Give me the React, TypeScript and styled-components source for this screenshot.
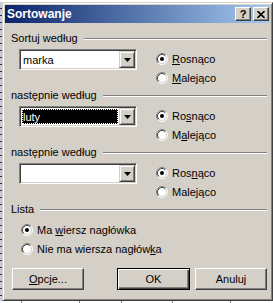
import React from 'react';
import styled, { createGlobalStyle } from 'styled-components';

const GlobalStyle = createGlobalStyle`
  html, body {
    margin: 0;
    padding: 0;
    background: #ffffff;
  }
  body {
    font-family: "Liberation Sans", Arial, sans-serif;
    font-size: 11px;
    color: #000;
  }
`;

const Page = styled.div`
  width: 273px;
  height: 303px;
  display: flex;
  flex-direction: column;
  background: #ffffff;
  overflow: hidden;
`;
const TopStrip = styled.div`
  height: 2px;
  flex-shrink: 0;
`;
const Middle = styled.div`
  display: flex;
`;
const RowHeaders = styled.div`
  width: 2px;
  flex-shrink: 0;
  background: repeating-linear-gradient(to bottom, #c9c7e0 0 6px, #303040 6px 7px);
`;
const SheetRow = styled.div`
  flex: 1;
  display: flex;
`;
const Cell = styled.div<{ $w: number }>`
  width: ${p => p.$w}px;
  flex-shrink: 0;
  border-right: 1px solid #808080;
  box-sizing: border-box;
`;

const Dialog = styled.div`
  width: 271px;
  flex-shrink: 0;
  box-sizing: border-box;
  display: flex;
  flex-direction: column;
  background: #d4d0c8;
  border: 1px solid;
  border-color: #d4d0c8 #404040 #404040 #d4d0c8;
  box-shadow: inset 1px 1px #ffffff, inset -1px -1px #808080;
  padding: 2px;
`;
const TitleBar = styled.div`
  height: 18px;
  display: flex;
  align-items: center;
  gap: 2px;
  padding: 0 1px 0 2px;
  background: linear-gradient(to right, #0a246a, #a6caf0);
`;
const Title = styled.div`
  flex: 1;
  color: #ffffff;
  font-weight: bold;
  font-size: 12px;
`;
const CaptionButton = styled.div`
  width: 16px;
  height: 14px;
  box-sizing: border-box;
  display: flex;
  align-items: center;
  justify-content: center;
  background: #d4d0c8;
  border: 1px solid;
  border-color: #ffffff #404040 #404040 #ffffff;
  box-shadow: inset -1px -1px #808080;
  font-weight: bold;
  font-size: 11px;
  line-height: 1;
`;

const Content = styled.div`
  display: flex;
  flex-direction: column;
  padding: 9px 3px 8px 6px;
`;
const Section = styled.div`
  height: 57px;
  display: flex;
  flex-direction: column;
`;
const GroupHeader = styled.div`
  height: 13px;
  line-height: 13px;
  display: flex;
  align-items: center;
`;
const GroupLine = styled.div`
  flex: 1;
  margin-left: 6px;
  height: 0;
  border-top: 1px solid #808080;
  border-bottom: 1px solid #ffffff;
`;
const SortBody = styled.div`
  display: flex;
  align-items: flex-start;
  margin: 4px 0 0 8px;
`;
const ListBody = styled.div`
  display: flex;
  flex-direction: column;
  margin: 4px 0 0 10px;
`;
const RadioColumn = styled.div`
  display: flex;
  flex-direction: column;
  margin-left: 19px;
`;
const RadioRow = styled.label`
  height: 19px;
  display: flex;
  align-items: center;
  gap: 4px;
`;

const Combo = styled.div`
  width: 118px;
  height: 21px;
  margin-top: 0;
  box-sizing: border-box;
  display: flex;
  background: #ffffff;
  border: 1px solid;
  border-color: #808080 #ffffff #ffffff #808080;
  box-shadow: inset 1px 1px #404040, inset -1px -1px #d4d0c8;
  padding: 1px;
`;
const ComboText = styled.div<{ $selected?: boolean }>`
  flex: 1;
  display: flex;
  align-items: center;
  margin: 1px;
  padding-left: 1px;
  box-sizing: border-box;
  background: ${p => (p.$selected ? '#000000' : 'transparent')};
  color: ${p => (p.$selected ? '#ffffff' : '#000000')};
  outline: ${p => (p.$selected ? '1px dotted #ffffff' : 'none')};
  outline-offset: -1px;
`;
const DropButton = styled.div`
  width: 16px;
  box-sizing: border-box;
  display: flex;
  align-items: center;
  justify-content: center;
  background: #d4d0c8;
  border: 1px solid;
  border-color: #d4d0c8 #404040 #404040 #d4d0c8;
  box-shadow: inset 1px 1px #ffffff, inset -1px -1px #808080;
`;

const ButtonRow = styled.div`
  display: flex;
  gap: 5px;
  margin: 10px 0 0 1px;
`;
const Button = styled.div<{ $default?: boolean; $push?: boolean }>`
  width: ${p => (p.$default ? 73 : 72)}px;
  height: 22px;
  box-sizing: border-box;
  display: flex;
  align-items: center;
  justify-content: center;
  background: #d4d0c8;
  margin-right: ${p => (p.$push ? 'auto' : '0')};
  border: 1px solid;
  border-color: ${p => (p.$default ? '#000000' : '#ffffff #404040 #404040 #ffffff')};
  box-shadow: ${p =>
    p.$default
      ? 'inset 1px 1px #ffffff, inset -1px -1px #404040, inset -2px -2px #808080'
      : 'inset -1px -1px #808080'};
`;

function RadioIcon({ checked }: { checked?: boolean }) {
  return (
    <svg width="12" height="12" viewBox="0 0 12 12">
      <circle cx="6" cy="6" r="5" fill="#ffffff" />
      <path d="M2.11 9.89 A5.5 5.5 0 0 1 9.89 2.11" fill="none" stroke="#808080" />
      <path d="M9.89 2.11 A5.5 5.5 0 0 1 2.11 9.89" fill="none" stroke="#ffffff" />
      <path d="M2.82 9.18 A4.5 4.5 0 0 1 9.18 2.82" fill="none" stroke="#404040" />
      <path d="M9.18 2.82 A4.5 4.5 0 0 1 2.82 9.18" fill="none" stroke="#d4d0c8" />
      {checked && <circle cx="6" cy="6" r="2" fill="#000000" />}
    </svg>
  );
}

function Arrow() {
  return (
    <svg width="7" height="4" viewBox="0 0 7 4">
      <path d="M0 0 H7 L3.5 4 Z" fill="#000000" />
    </svg>
  );
}

function CloseGlyph() {
  return (
    <svg width="8" height="7" viewBox="0 0 8 7">
      <path d="M0.5 0 L7.5 7 M7.5 0 L0.5 7" stroke="#000000" strokeWidth="1.6" />
    </svg>
  );
}

interface SortLevel {
  title: string;
  value: string;
  selected?: boolean;
  asc: React.ReactNode;
  desc: React.ReactNode;
}

const levels: SortLevel[] = [
  {
    title: 'Sortuj według',
    value: 'marka',
    asc: <><u>R</u>osnąco</>,
    desc: <><u>M</u>alejąco</>,
  },
  {
    title: 'następnie według',
    value: 'luty',
    selected: true,
    asc: <>Ro<u>s</u>nąco</>,
    desc: <>M<u>a</u>lejąco</>,
  },
  {
    title: 'następnie według',
    value: '',
    asc: <>Ros<u>n</u>ąco</>,
    desc: <>Male<u>j</u>ąco</>,
  },
];

export default function App() {
  return (
    <Page>
      <GlobalStyle />
      <TopStrip />
      <Middle>
        <RowHeaders />
        <Dialog>
          <TitleBar>
            <Title>Sortowanje</Title>
            <CaptionButton>?</CaptionButton>
            <CaptionButton><CloseGlyph /></CaptionButton>
          </TitleBar>
          <Content>
            {levels.map((lv, i) => (
              <Section key={i}>
                <GroupHeader>
                  <span>{lv.title}</span>
                  <GroupLine />
                </GroupHeader>
                <SortBody>
                  <Combo>
                    <ComboText $selected={lv.selected}>{lv.value}</ComboText>
                    <DropButton><Arrow /></DropButton>
                  </Combo>
                  <RadioColumn>
                    <RadioRow><RadioIcon checked /><span>{lv.asc}</span></RadioRow>
                    <RadioRow><RadioIcon /><span>{lv.desc}</span></RadioRow>
                  </RadioColumn>
                </SortBody>
              </Section>
            ))}
            <GroupHeader>
              <span>Lista</span>
              <GroupLine />
            </GroupHeader>
            <ListBody>
              <RadioRow><RadioIcon checked /><span>Ma <u>w</u>iersz nagłówka</span></RadioRow>
              <RadioRow><RadioIcon /><span>Nie ma wiersza nagłów<u>k</u>a</span></RadioRow>
            </ListBody>
            <ButtonRow>
              <Button $push><span><u>O</u>pcje...</span></Button>
              <Button $default>OK</Button>
              <Button>Anuluj</Button>
            </ButtonRow>
          </Content>
        </Dialog>
      </Middle>
      <SheetRow>
        <Cell $w={22} />
        <Cell $w={58} />
        <Cell $w={42} />
        <Cell $w={51} />
        <Cell $w={58} />
      </SheetRow>
    </Page>
  );
}
